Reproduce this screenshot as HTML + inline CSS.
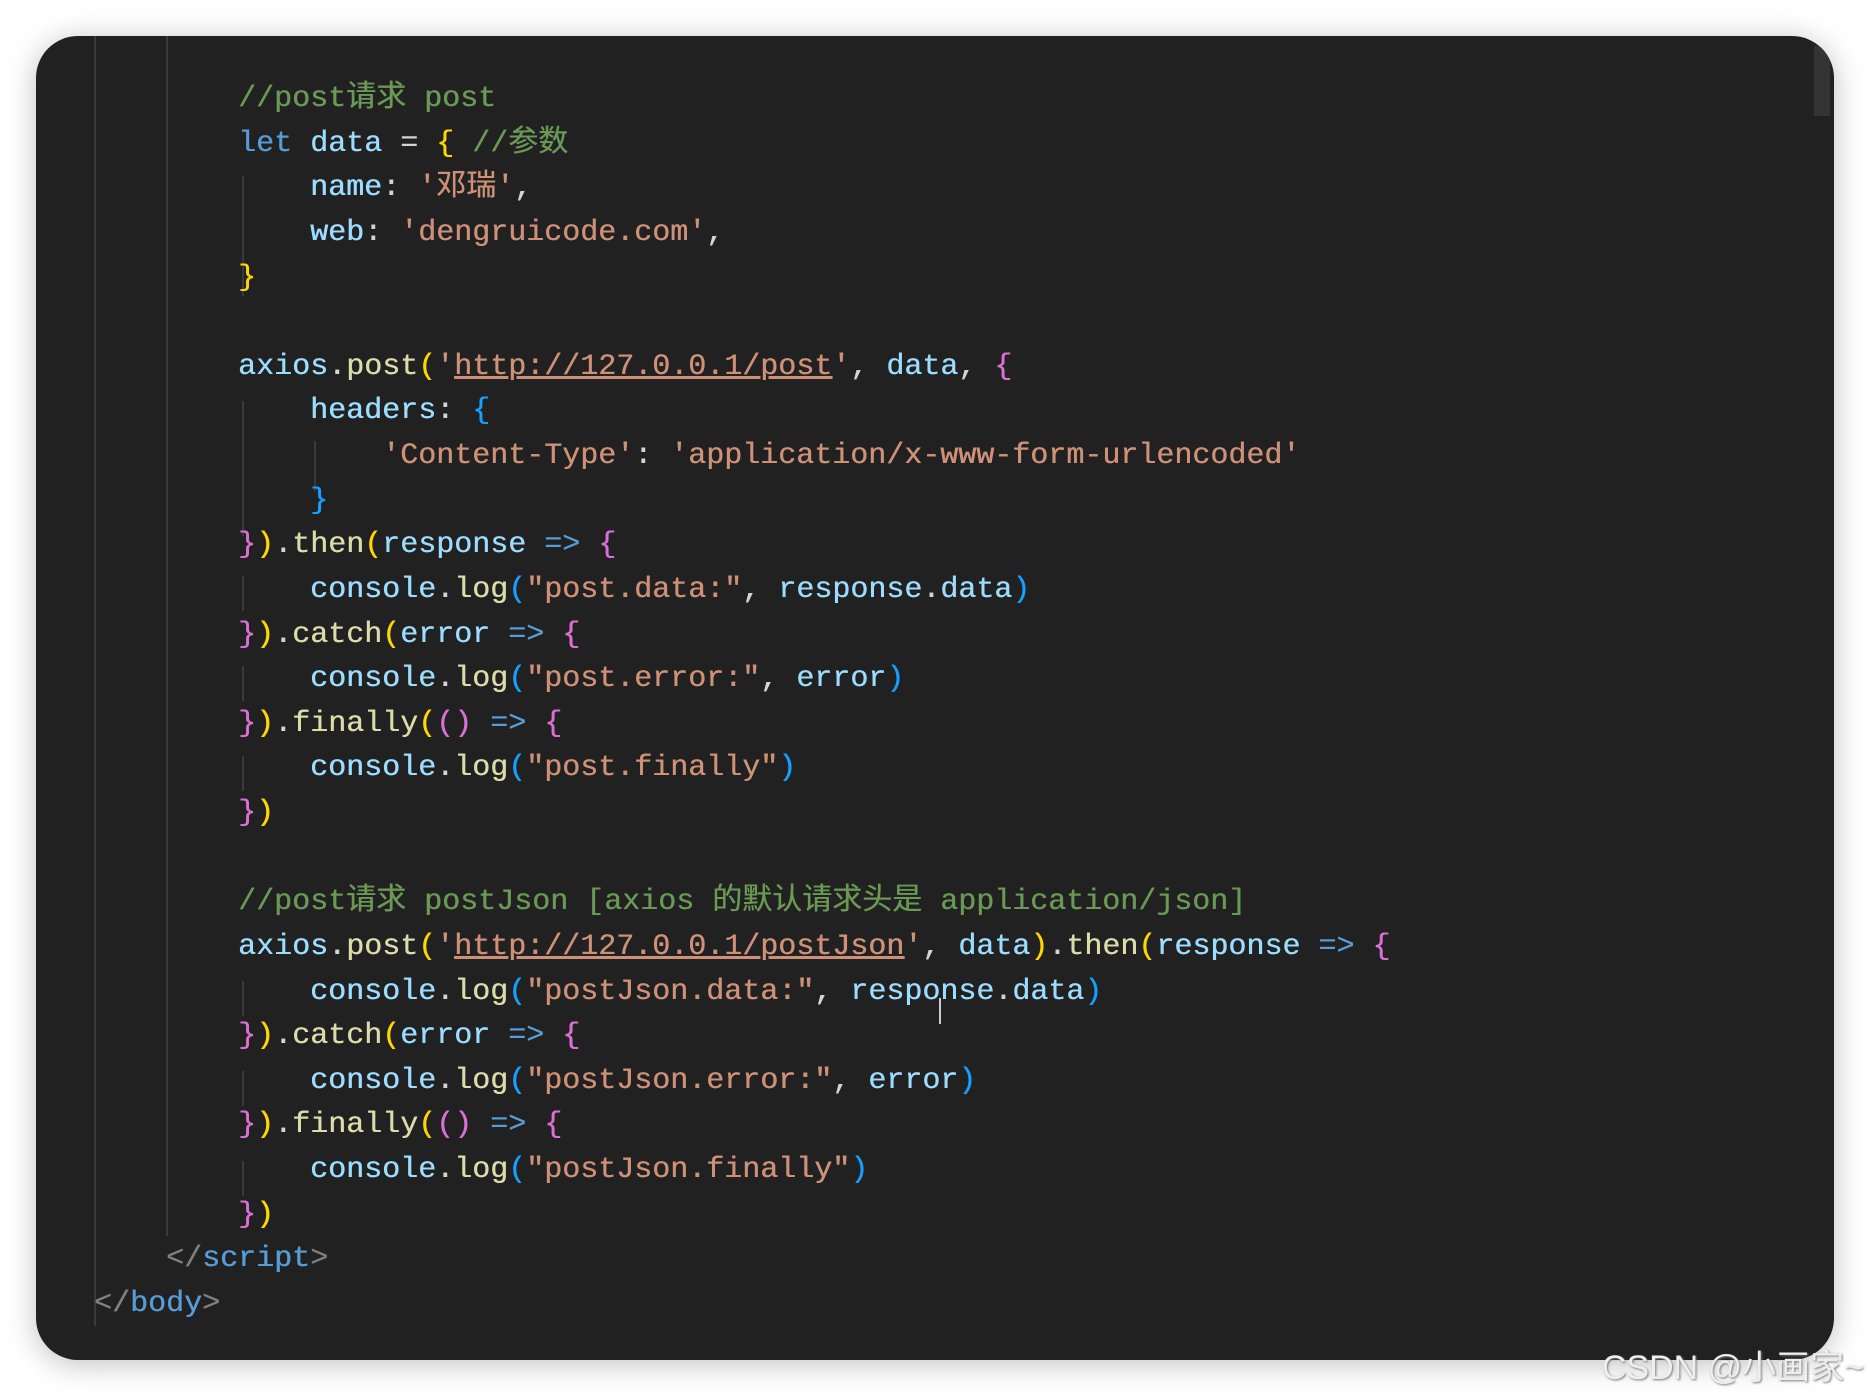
<!DOCTYPE html>
<html><head><meta charset="utf-8"><style>
html,body{margin:0;padding:0;background:#fff;width:1870px;height:1396px;overflow:hidden}
.card{position:absolute;left:36px;top:36px;width:1798px;height:1324px;background:#212121;border-radius:42px;box-shadow:0 4px 30px rgba(0,0,0,.25);overflow:hidden}
.g{position:absolute;width:2px;background:#3a3a3a}
.code{position:absolute;left:22px;top:41px;font-family:"Liberation Mono","Noto Sans CJK SC",monospace;font-size:30px;line-height:44.64px;color:#d4d4d4;letter-spacing:0}
.l{height:44.64px;white-space:pre;text-shadow:0.4px 0 0 currentColor}
.c{color:#6a9955}.k{color:#569cd6}.v{color:#9cdcfe}.s{color:#ce9178}.f{color:#dcdcaa}
.b1{color:#ffd700}.b2{color:#da70d6}.b3{color:#179fff}.t{color:#808080}.tg{color:#569cd6}
.u{text-decoration:underline}
.wm{position:absolute;right:6px;top:1340px;font-family:"Liberation Sans","Noto Sans CJK SC",sans-serif;font-size:34px;color:#eee;text-shadow:1px 1px 2px #777}
</style></head><body>
<div class="card">
<div class="g" style="left:58px;top:0;height:1290px"></div>
<div class="g" style="left:130px;top:0;height:1200px"></div>
<div class="g" style="left:206px;top:140px;height:120px"></div>
<div class="g" style="left:206px;top:365px;height:135px"></div>
<div class="g" style="left:278px;top:405px;height:50px"></div>
<div class="g" style="left:206px;top:540px;height:35px"></div>
<div class="g" style="left:206px;top:630px;height:35px"></div>
<div class="g" style="left:206px;top:720px;height:35px"></div>
<div class="g" style="left:206px;top:945px;height:35px"></div>
<div class="g" style="left:206px;top:1035px;height:35px"></div>
<div class="g" style="left:206px;top:1125px;height:35px"></div>
<div class="code"><div class="l">          <span class="c">//post请求 post</span></div><div class="l">          <span class="k">let</span> <span class="v">data</span> = <span class="b1">{</span> <span class="c">//参数</span></div><div class="l">              <span class="v">name</span>: <span class="s">'邓瑞'</span>,</div><div class="l">              <span class="v">web</span>: <span class="s">'dengruicode.com'</span>,</div><div class="l">          <span class="b1">}</span></div><div class="l"> </div><div class="l">          <span class="v">axios</span>.<span class="f">post</span><span class="b1">(</span><span class="s">'<span class="u">http://127.0.0.1/post</span>'</span>, <span class="v">data</span>, <span class="b2">{</span></div><div class="l">              <span class="v">headers</span>: <span class="b3">{</span></div><div class="l">                  <span class="s">'Content-Type'</span>: <span class="s">'application/x-www-form-urlencoded'</span></div><div class="l">              <span class="b3">}</span></div><div class="l">          <span class="b2">}</span><span class="b1">)</span>.<span class="f">then</span><span class="b1">(</span><span class="v">response</span> <span class="k">=&gt;</span> <span class="b2">{</span></div><div class="l">              <span class="v">console</span>.<span class="f">log</span><span class="b3">(</span><span class="s">"post.data:"</span>, <span class="v">response</span>.<span class="v">data</span><span class="b3">)</span></div><div class="l">          <span class="b2">}</span><span class="b1">)</span>.<span class="f">catch</span><span class="b1">(</span><span class="v">error</span> <span class="k">=&gt;</span> <span class="b2">{</span></div><div class="l">              <span class="v">console</span>.<span class="f">log</span><span class="b3">(</span><span class="s">"post.error:"</span>, <span class="v">error</span><span class="b3">)</span></div><div class="l">          <span class="b2">}</span><span class="b1">)</span>.<span class="f">finally</span><span class="b1">(</span><span class="b2">()</span> <span class="k">=&gt;</span> <span class="b2">{</span></div><div class="l">              <span class="v">console</span>.<span class="f">log</span><span class="b3">(</span><span class="s">"post.finally"</span><span class="b3">)</span></div><div class="l">          <span class="b2">}</span><span class="b1">)</span></div><div class="l"> </div><div class="l">          <span class="c">//post请求 postJson [axios 的默认请求头是 application/json]</span></div><div class="l">          <span class="v">axios</span>.<span class="f">post</span><span class="b1">(</span><span class="s">'<span class="u">http://127.0.0.1/postJson</span>'</span>, <span class="v">data</span><span class="b1">)</span>.<span class="f">then</span><span class="b1">(</span><span class="v">response</span> <span class="k">=&gt;</span> <span class="b2">{</span></div><div class="l">              <span class="v">console</span>.<span class="f">log</span><span class="b3">(</span><span class="s">"postJson.data:"</span>, <span class="v">response</span>.<span class="v">data</span><span class="b3">)</span></div><div class="l">          <span class="b2">}</span><span class="b1">)</span>.<span class="f">catch</span><span class="b1">(</span><span class="v">error</span> <span class="k">=&gt;</span> <span class="b2">{</span></div><div class="l">              <span class="v">console</span>.<span class="f">log</span><span class="b3">(</span><span class="s">"postJson.error:"</span>, <span class="v">error</span><span class="b3">)</span></div><div class="l">          <span class="b2">}</span><span class="b1">)</span>.<span class="f">finally</span><span class="b1">(</span><span class="b2">()</span> <span class="k">=&gt;</span> <span class="b2">{</span></div><div class="l">              <span class="v">console</span>.<span class="f">log</span><span class="b3">(</span><span class="s">"postJson.finally"</span><span class="b3">)</span></div><div class="l">          <span class="b2">}</span><span class="b1">)</span></div><div class="l">      <span class="t">&lt;/</span><span class="tg">script</span><span class="t">&gt;</span></div><div class="l">  <span class="t">&lt;/</span><span class="tg">body</span><span class="t">&gt;</span></div></div>
<div style="position:absolute;left:903px;top:962px;width:2px;height:26px;background:#ccc"></div>
<div style="position:absolute;left:1778px;top:10px;width:16px;height:70px;background:#3a3d40;opacity:.7"></div>
</div>
<div class="wm">CSDN @小画家~</div>
</body></html>
